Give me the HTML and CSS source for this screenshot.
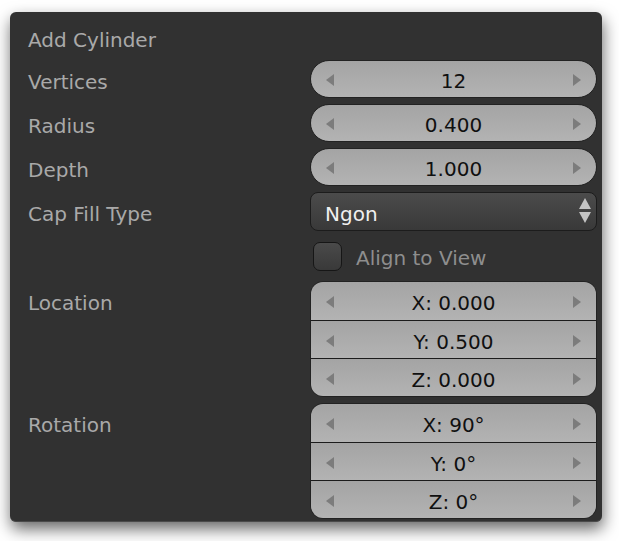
FILE: index.html
```html
<!DOCTYPE html>
<html>
<head>
<meta charset="utf-8">
<link rel="stylesheet" href="styles.css">
</head>
<body>
<div class="panel">
  <div class="title">Add Cylinder</div>
  <div class="grid">
    <div class="label">Vertices</div>
    <div class="num single"><span class="arr l"></span><span class="val">12</span><span class="arr r"></span></div>

    <div class="label">Radius</div>
    <div class="num single"><span class="arr l"></span><span class="val">0.400</span><span class="arr r"></span></div>

    <div class="label">Depth</div>
    <div class="num single"><span class="arr l"></span><span class="val">1.000</span><span class="arr r"></span></div>

    <div class="label">Cap Fill Type</div>
    <div class="menu"><span class="menu-text">Ngon</span>
      <span class="updown"><span class="up"></span><span class="down"></span></span>
    </div>

    <div class="label"></div>
    <div class="check-row"><span class="check"></span><span class="check-text">Align to View</span></div>

    <div class="label top">Location</div>
    <div class="group">
      <div class="num"><span class="arr l"></span><span class="val">X: 0.000</span><span class="arr r"></span></div>
      <div class="num"><span class="arr l"></span><span class="val">Y: 0.500</span><span class="arr r"></span></div>
      <div class="num"><span class="arr l"></span><span class="val">Z: 0.000</span><span class="arr r"></span></div>
    </div>

    <div class="label top">Rotation</div>
    <div class="group">
      <div class="num"><span class="arr l"></span><span class="val">X: 90°</span><span class="arr r"></span></div>
      <div class="num"><span class="arr l"></span><span class="val">Y: 0°</span><span class="arr r"></span></div>
      <div class="num"><span class="arr l"></span><span class="val">Z: 0°</span><span class="arr r"></span></div>
    </div>
  </div>
</div>
</body>
</html>
```
FILE: styles.css
```css
* { box-sizing: border-box; }
html, body { margin: 0; padding: 0; background: #ffffff; }
body {
  padding: 12px 0 0 10px;
  height: 541px;
  font-family: "DejaVu Sans", "Liberation Sans", sans-serif;
  font-size: 20px;
}
.panel {
  width: 592px;
  height: 510px;
  background: #313131;
  border-radius: 6px;
  box-shadow: 1px 7px 16px rgba(0,0,0,0.6);
  border-bottom: 1px solid #4a4a4a;
  padding: 4px 5px 0 18px;
}
.title {
  height: 44px;
  line-height: 44px;
  padding-top: 2px;
  color: #a9a9a9;
}
.grid {
  display: grid;
  grid-template-columns: 282px 287px;
  row-gap: 6px;
}
.label {
  color: #a9a9a9;
  height: 38px;
  line-height: 38px;
  padding-top: 3px;
  white-space: nowrap;
}
.num {
  position: relative;
  height: 38px;
  display: flex;
  align-items: center;
  justify-content: center;
  background: linear-gradient(#a4a4a4, #b3b3b3);
  color: #101010;
}
.num.single {
  border: 1px solid #222;
  border-radius: 19px;
}
.val { line-height: 1; padding-top: 4px; }
.arr {
  position: absolute;
  top: 50%;
  width: 0; height: 0;
  margin-top: -5px;
  border-top: 6px solid transparent;
  border-bottom: 6px solid transparent;
}
.arr.l { left: 15px; border-right: 8px solid #7c7c7c; }
.arr.r { right: 15px; border-left: 8px solid #7c7c7c; }
.group {
  border: 1px solid #222;
  border-radius: 13px;
  overflow: hidden;
}
.group .num { height: 38px; }
.group .num + .num { border-top: 1px solid #1c1c1c; }
.menu {
  position: relative;
  height: 39px;
  border: 1px solid #1c1c1c;
  border-radius: 8px;
  background: linear-gradient(#4b4b4b, #393939);
  display: flex;
  align-items: center;
  padding-left: 14px;
  padding-top: 4px;
  color: #f0f0f0;
}
.updown {
  position: absolute;
  right: 5px;
  top: 5px;
  display: flex;
  flex-direction: column;
  gap: 3px;
}
.up, .down {
  width: 0; height: 0;
  border-left: 6px solid transparent;
  border-right: 6px solid transparent;
}
.up { border-bottom: 11px solid #c4c4c4; }
.down { border-top: 11px solid #c4c4c4; }
.check-row {
  height: 38px;
  display: flex;
  align-items: center;
  gap: 14px;
  padding-left: 3px;
}
.check {
  width: 29px;
  height: 29px;
  border: 1px solid #161616;
  border-radius: 7px;
  background: linear-gradient(#4a4a4a, #393939);
}
.check-text { color: #8e8e8e; padding-top: 4px; }
```
